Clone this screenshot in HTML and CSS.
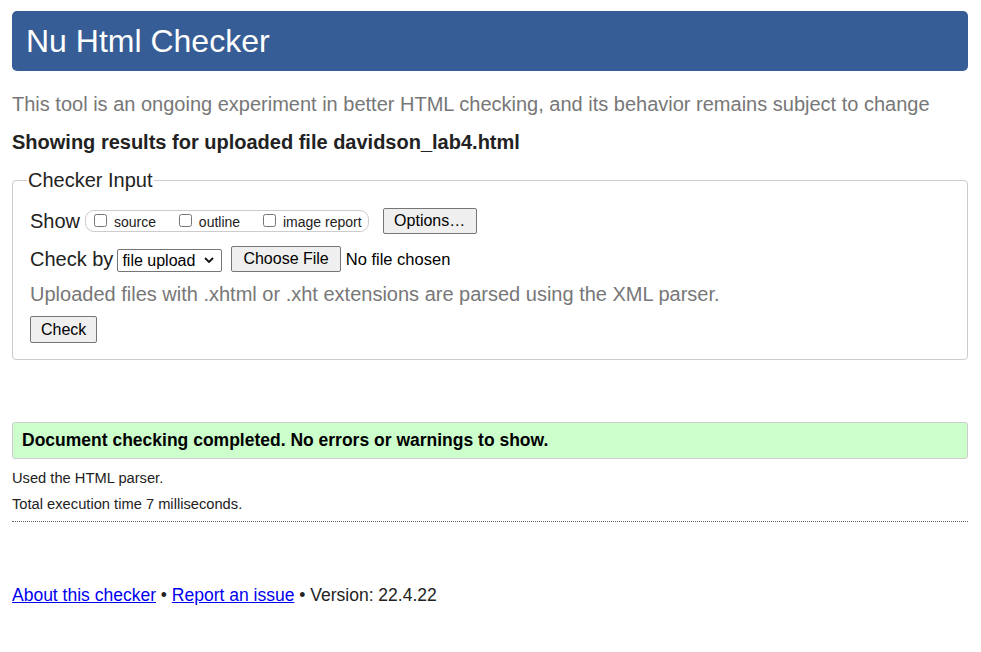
FILE: index.html
```html
<!DOCTYPE html>
<html lang="en">
<head>
<meta charset="utf-8">
<title>Nu Html Checker</title>
<link rel="stylesheet" href="styles.css">
</head>
<body>
<header class="banner"><h1 class="title">Nu Html Checker</h1></header>
<p class="intro">This tool is an ongoing experiment in better HTML checking, and its behavior remains subject to change</p>
<p class="showing">Showing results for uploaded file davidson_lab4.html</p>
<fieldset class="input">
  <legend class="legend">Checker Input</legend>
  <div class="row">
    <span class="label">Show</span>
    <span class="opts">
      <label class="opt"><input type="checkbox" class="cb"> source</label>
      <label class="opt"><input type="checkbox" class="cb"> outline</label>
      <label class="opt"><input type="checkbox" class="cb"> image report</label>
    </span>
    <button class="btn btn-options">Options…</button>
  </div>
  <div class="row row-by">
    <span class="label">Check by</span>
    <span class="select-wrap">
      <select class="select"><option>file upload</option></select>
      <svg class="chevron" width="10" height="6" viewBox="0 0 10 6" aria-hidden="true"><path d="M1 1 L5 5 L9 1" fill="none" stroke="#111" stroke-width="1.8"/></svg>
    </span>
    <span class="file"><button class="btn btn-file">Choose File</button><span class="nofile">No file chosen</span></span>
  </div>
  <p class="note">Uploaded files with .xhtml or .xht extensions are parsed using the XML parser.</p>
  <div class="row row-check"><button class="btn btn-check">Check</button></div>
</fieldset>
<div class="success">Document checking completed. No errors or warnings to show.</div>
<p class="detail">Used the HTML parser.</p>
<p class="detail detail-2">Total execution time 7 milliseconds.</p>
<hr class="rule">
<p class="footer"><a href="#" class="link">About this checker</a> • <a href="#" class="link">Report an issue</a> • Version: 22.4.22</p>
</body>
</html>
```
FILE: styles.css
```css
html, body { margin: 0; padding: 0; background: #fff; }
body {
  font-family: "Liberation Sans", Arial, sans-serif;
  color: #222;
  padding: 11px 13px 0 12px;
}
.banner {
  background: #365d95;
  border-radius: 5px;
  height: 60px;
  display: flex;
  align-items: center;
  padding: 0 14px;
}
.title {
  margin: 0;
  font-size: 32px;
  font-weight: normal;
  color: #fff;
  line-height: 1;
  padding-bottom: 1px;
}
.intro {
  margin: 20px 0 0;
  font-size: 20px;
  color: #777;
  line-height: 27px;
}
.showing {
  margin: 13px 0 0;
  font-size: 20px;
  font-weight: bold;
  color: #222;
  line-height: 23px;
}
.input {
  margin: 15px 0 0;
  border: 1px solid #ccc;
  border-radius: 4px;
  padding: 16px 17px 16px;
}
.legend {
  font-size: 20px;
  line-height: 23px;
  padding: 0 1px;
  margin-left: -3px;
  color: #222;
}
.row {
  display: flex;
  align-items: center;
  font-size: 20px;
  height: 26px;
}
.row-by { margin-top: 12px; }
.label { margin-right: 5px; }
.row-by .label { margin-right: 4px; }
.opts {
  display: inline-flex;
  border: 1px solid #ccc;
  border-radius: 9px;
  height: 20px;
  padding: 0 6px 0 4px;
  gap: 19px;
  font-size: 14px;
  color: #222;
}
.opt { display: block; line-height: 21px; white-space: nowrap; }
.cb { margin: 3px 3px 3px 4px; width: 13px; height: 13px; }
.btn {
  font-family: "Liberation Sans", Arial, sans-serif;
  background: #efefef;
  border: 1px solid #767676;
  border-radius: 2px;
  color: #000;
  font-size: 16px;
  padding: 0 10px;
  height: 26px;
}
.btn-options { margin-left: 14px; padding: 0 10.5px; }
.select-wrap { position: relative; display: inline-block; height: 23px; }
.select {
  appearance: none;
  -webkit-appearance: none;
  font-family: "Liberation Sans", Arial, sans-serif;
  font-size: 16px;
  width: 105px;
  height: 23px;
  border: 1px solid #767676;
  border-radius: 2px;
  padding: 0 0 0 4px;
  margin: 0;
  background: #fff;
  color: #000;
}
.chevron { position: absolute; right: 8px; top: 9px; pointer-events: none; }
.file { margin-left: 9px; display: inline-flex; align-items: center; font-size: 16.5px; }
.btn-file { padding: 0 11px; }
.nofile { margin-left: 5px; color: #000; }
.note {
  margin: 11px 0 0;
  color: #777;
  font-size: 20px;
  line-height: 23px;
}
.row-check { margin-top: 10px; height: 27px; }
.btn-check { height: 27px; }
.success {
  margin-top: 62px;
  background: #ccffcc;
  border: 1px solid #ccc;
  border-radius: 3px;
  padding: 7px 9px;
  font-size: 17.5px;
  font-weight: bold;
  color: #000;
  line-height: 21px;
}
.detail {
  margin: 10px 0 0;
  font-size: 14.7px;
  line-height: 18px;
  color: #222;
}
.detail-2 { margin-top: 8px; }
.rule {
  margin: 8px 0 0;
  border: 0;
  border-top: 1px dotted #666;
  height: 0;
}
.footer {
  margin: 63px 0 0;
  font-size: 17.5px;
  line-height: 20px;
  color: #222;
}
.link { color: #00e; }
```
